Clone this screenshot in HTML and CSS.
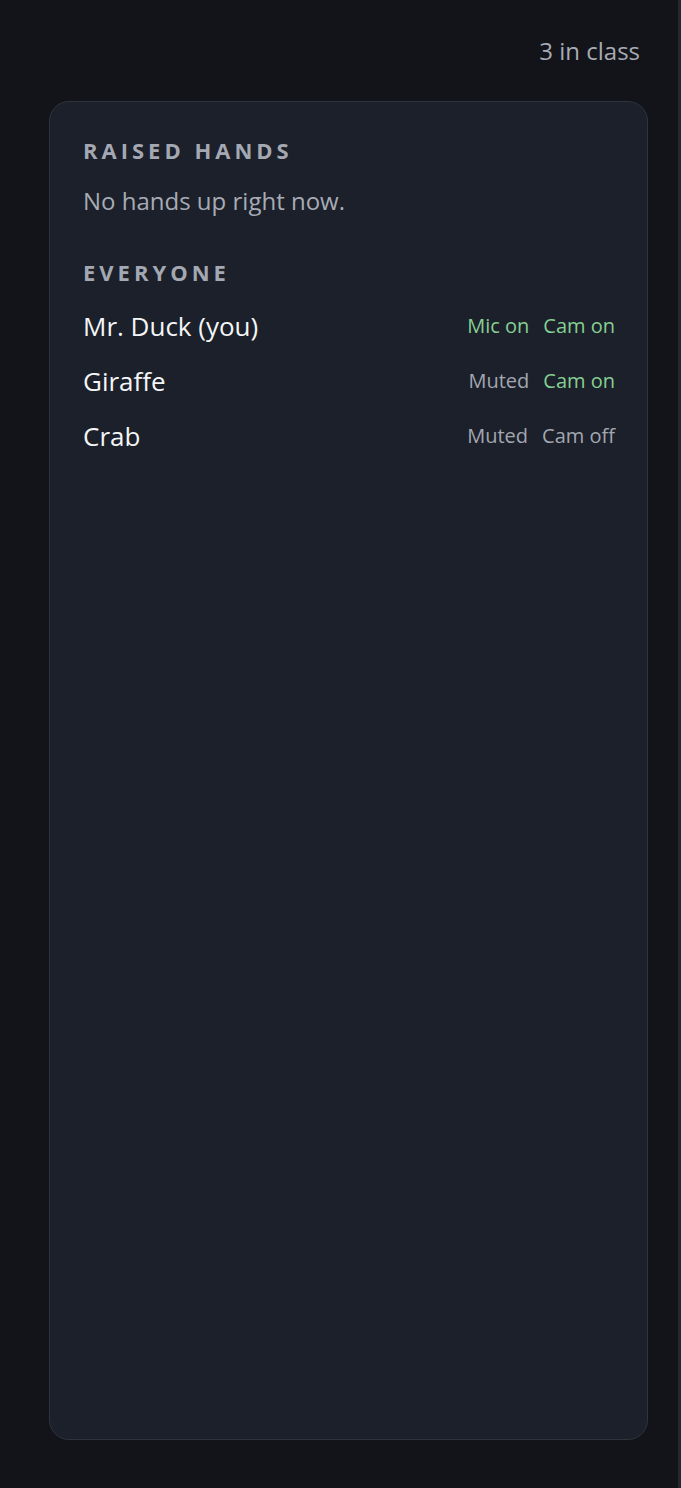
FILE: index.html
```html
<!DOCTYPE html>
<html>
	<head>
		<meta charset="UTF-8">
		<title>Class roster</title>
		<link rel="stylesheet" href="styles.css">
	</head>
	<body>
		<div class="side">
			<div class="top">3 in class</div>

			<div class="panel">
				<h3 class="label">RAISED HANDS</h3>
				<p class="empty">No hands up right now.</p>

				<h3 class="label">EVERYONE</h3>
				<ul class="people">
					<li>
						<span class="name">Mr. Duck (you)</span>
						<span class="flags"><span class="on">Mic on</span><span class="on">Cam on</span></span>
					</li>
					<li>
						<span class="name">Giraffe</span>
						<span class="flags"><span>Muted</span><span class="on">Cam on</span></span>
					</li>
					<li>
						<span class="name">Crab</span>
						<span class="flags"><span>Muted</span><span>Cam off</span></span>
					</li>
				</ul>
			</div>
		</div>
	</body>
</html>
```

FILE: styles.css
```css
*{
	margin: 0;
	padding: 0;
	box-sizing: border-box;
}

ul{
	list-style: none;
}

html, body{
	height: 100%;
}

body{
	background: #121419;
	font-family: "Open Sans", "Liberation Sans", sans-serif;
	font-weight: 500;
	color: #f1f3f6;
}

.side{ /* whole sidebar */
	height: 100%;
	display: flex;
	flex-direction: column;
	padding: 0 30px 48px 49px;
	border-right: 3px solid #25282e;
}

.top{
	height: 101px;
	display: flex;
	justify-content: flex-end;
	align-items: center;
	padding: 0 8px 0 0;
	font-size: 24px;
	color: #a7abb5;
}

.panel{
	flex: 1;
	background: #1b202a;
	border: 1px solid #2e343e;
	border-radius: 20px;
	padding: 34px 32px 0 33px;
}

.label{
	font-size: 22px;
	font-weight: 700;
	letter-spacing: 4px;
	color: #a4a8b3;
	line-height: 28px;
}

.empty{
	font-size: 24px;
	color: #a7abb5;
	line-height: 30px;
	margin: 22px 0 42px;
}

.people{
	margin-top: 12px;
}

.people li{
	display: flex;
	justify-content: space-between;
	align-items: center;
	height: 55px;
}

.name{
	font-size: 26px;
	color: #f4f5f7;
}

.flags{
	display: flex;
	gap: 14px;
	font-size: 20px;
	color: #a3a7b1;
}

.flags .on{
	color: #86cf94;
}
```
